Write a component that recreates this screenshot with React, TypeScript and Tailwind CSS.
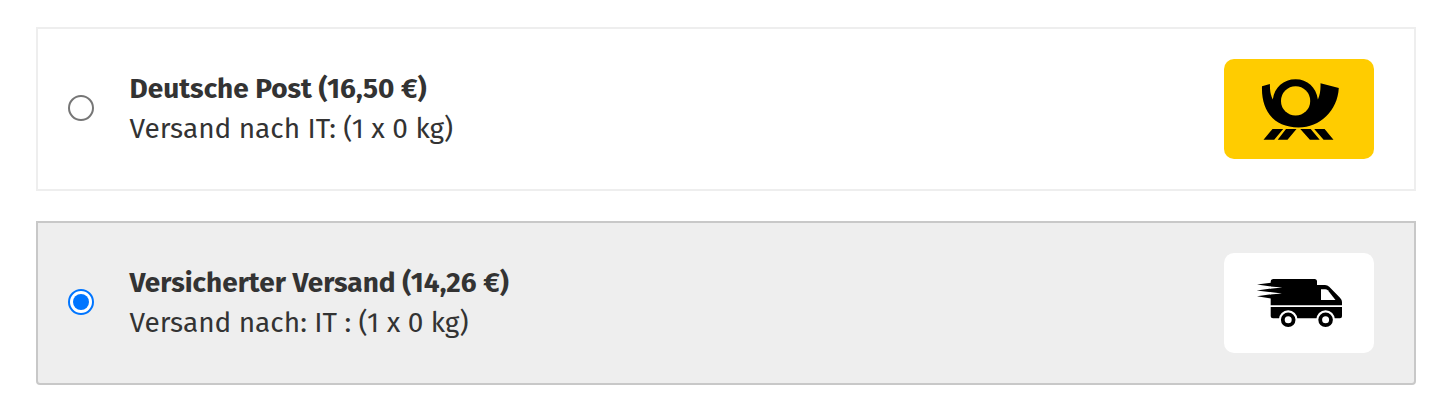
import React from 'react';
import clsx from 'clsx';

interface ShippingOption {
  id: string;
  title: string;
  description: string;
  logo: React.ReactNode;
}

const PostLogo: React.FC = () => (
  <svg viewBox="0 0 150 100" className="block w-full h-full">
    <path d="M38 27.2 45.9 24.9C45.8 31 46.6 36.5 48.8 40.5C50.5 28 59.5 20.2 71.6 20.2C83.5 20.2 92 28 93.9 40.5C96 36 96.7 31 96.5 24.2L114.8 29C113.5 52 96 68.4 74.5 68.4C50 68.4 37 52 38 27.2Z" />
    <circle cx="71.6" cy="41.9" r="14.6" fill="#ffcc00" />
    <path d="M48.5 70h10.7l-9 10.8H39.5zM62 70h10.5l-9 10.8h-9.8zM76.3 70h10.4l9 10.8h-9.8zM90.2 70h10.4l8.9 10.8h-9.9z" />
  </svg>
);

const VanLogo: React.FC = () => (
  <svg viewBox="0 0 150 100" className="block w-full h-full">
    <path d="M49.5 26H90.5Q93 26 93 28.5V32H101Q103.5 32 105.2 33.8L116 44.8Q118 47 118 49V63.3Q118 65.3 116 65.3H49Q46.7 65.3 46.7 63V28.8Q46.7 26 49.5 26Z" />
    <path d="M33 31.6 47 29.8 60 30V47L47 45.4 33 43.3 47 41.3V39.2L32.7 37.5 47 35.6V33.5z" />
    <path d="M46 33.4 58.3 34.5 46 35.8zM46 39.1 58 40.4 46 41.6z" fill="#fff" />
    <path d="M97 36.2h4.2q1.5 0 2.6 1.1L111.5 47H97z" fill="#fff" />
    <path d="M46 52.3h73v1.6H46z" fill="#fff" />
    <circle cx="64.2" cy="66.6" r="9.3" fill="#fff" />
    <circle cx="101.6" cy="66.6" r="9.3" fill="#fff" />
    <circle cx="64.2" cy="66.8" r="5.4" fill="none" stroke="#000" strokeWidth="3.8" />
    <circle cx="101.6" cy="66.8" r="5.4" fill="none" stroke="#000" strokeWidth="3.8" />
  </svg>
);

const options: ShippingOption[] = [
  {
    id: 'post',
    title: 'Deutsche Post (16,50 €)',
    description: 'Versand nach IT: (1 x 0 kg)',
    logo: <PostLogo />,
  },
  {
    id: 'insured',
    title: 'Versicherter Versand (14,26 €)',
    description: 'Versand nach: IT : (1 x 0 kg)',
    logo: <VanLogo />,
  },
];

const App: React.FC = () => {
  const [selected, setSelected] = React.useState('insured');

  return (
    <div className="min-h-[409px] bg-white pt-[27px] pl-9 pr-8 flex flex-col gap-[30px] font-['Fira_Sans','Noto_Sans',sans-serif] text-[#333]">
      {options.map((option) => {
        const checked = option.id === selected;
        return (
          <label
            key={option.id}
            className={clsx(
              'flex items-center h-[164px] pl-[30px] pr-10 border-2 cursor-pointer',
              checked ? 'bg-[#eee] border-[#c8c8c8] rounded-b-[4px]' : 'bg-white border-[#eee]'
            )}
          >
            <input
              type="radio"
              name="shipping"
              className="sr-only"
              checked={checked}
              onChange={() => setSelected(option.id)}
            />
            <span
              className={clsx(
                'w-[26px] h-[26px] mb-0.5 shrink-0 rounded-full border-2 bg-white flex items-center justify-center',
                checked ? 'border-[#0075ff]' : 'border-[#767676]'
              )}
            >
              {checked && <span className="w-4 h-4 rounded-full bg-[#0075ff]" />}
            </span>
            <span className="ml-[35.6px] flex-1 text-[28px] leading-10 whitespace-nowrap">
              <strong className="block font-bold">{option.title}</strong>
              <span className="block">{option.description}</span>
            </span>
            <span
              className={clsx(
                'w-[150px] h-[100px] shrink-0 rounded-[10px] overflow-hidden',
                option.id === 'post' ? 'bg-[#ffcc00]' : 'bg-white'
              )}
            >
              {option.logo}
            </span>
          </label>
        );
      })}
    </div>
  );
};

export default App;
